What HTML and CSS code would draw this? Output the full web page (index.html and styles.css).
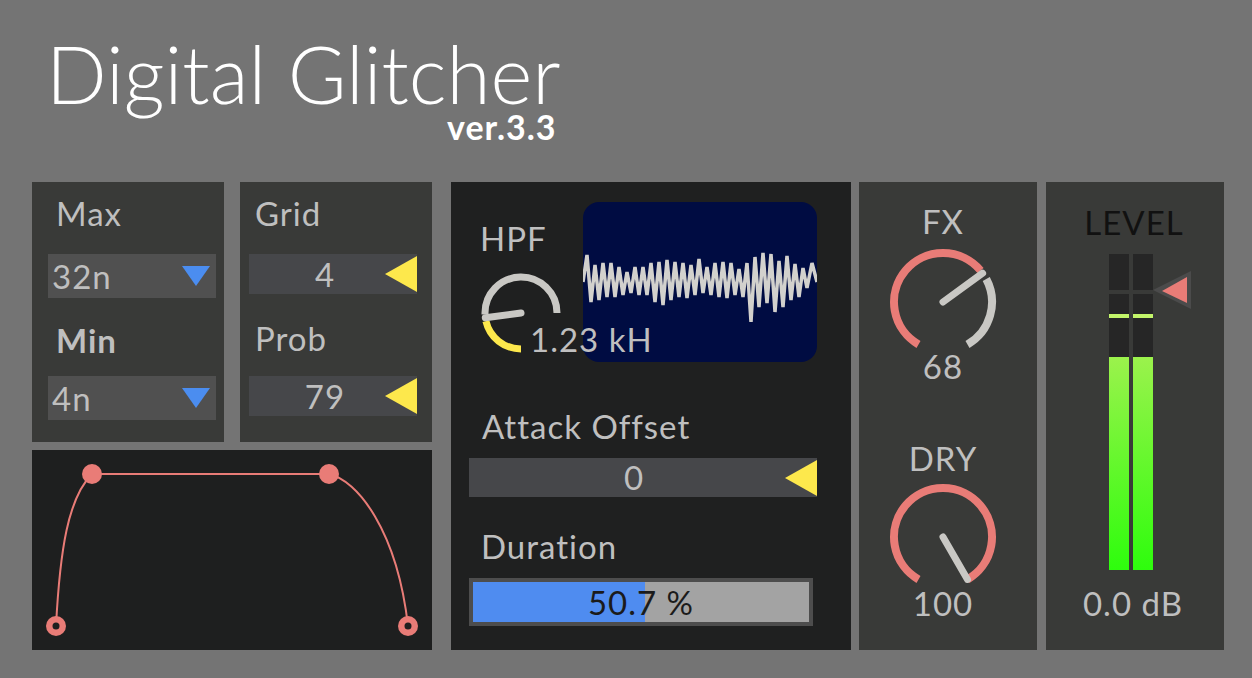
FILE: index.html
```html
<!DOCTYPE html>
<html>
<head>
  <title>Digital Glitcher</title>
  <link rel="stylesheet" href="styles.css">
</head>
<body>
  <div class="device">
    <header class="title">
      <div class="title-inner">
        <h1>Digital Glitcher</h1>
        <div class="ver">ver.3.3</div>
      </div>
    </header>

    <main class="rack">
      <div class="left-col">
        <div class="top-pair">
          <!-- note length menus -->
          <section class="panel menus">
            <div class="label">Max</div>
            <div class="menu"><span>32n</span><i class="arrow-down"></i></div>
            <div class="label bold gap-min">Min</div>
            <div class="menu menu-2"><span>4n</span><i class="arrow-down"></i></div>
          </section>

          <!-- grid / probability -->
          <section class="panel numbers">
            <div class="label">Grid</div>
            <div class="numbox"><span>4</span><i class="arrow-left"></i></div>
            <div class="label gap-prob">Prob</div>
            <div class="numbox numbox-2"><span>79</span><i class="arrow-left"></i></div>
          </section>
        </div>

        <!-- envelope shape -->
        <section class="panel envelope">
          <svg width="400" height="200" viewBox="0 0 400 200">
            <g fill="none" stroke="#e97c77" stroke-width="2">
              <path d="M24,176 C28,100 36,48 60,24"/>
              <path d="M60,24 L297,24"/>
              <path d="M297,24 C325,30 365,80 376,176"/>
            </g>
            <g fill="#e97c77">
              <circle cx="60" cy="24" r="10"/>
              <circle cx="297" cy="24" r="10"/>
              <circle cx="24" cy="176" r="10"/>
              <circle cx="376" cy="176" r="10"/>
            </g>
            <circle cx="24" cy="176" r="3.5" fill="#1e1f1f"/>
            <circle cx="376" cy="176" r="3.5" fill="#1e1f1f"/>
          </svg>
        </section>
      </div>

      <section class="panel middle">
        <div class="hpf-row">
          <div class="hpf">
            <div class="label hpf-label">HPF</div>
            <svg class="hpf-knob" width="90" height="90" viewBox="-45 -45 90 90">
              <g fill="none" stroke-width="7">
                <path d="M0,36 A36,36 0 0 1 -35.08,8.1" stroke="#fde84c"/>
                <path d="M-35.98,1.26 A36,36 0 1 1 36,0" stroke="#c9c8c4"/>
              </g>
              <line x1="0" y1="0" x2="-35.7" y2="4.7" stroke="#c9c8c4" stroke-width="7" stroke-linecap="round"/>
            </svg>
          </div>
          <div class="scope">
            <svg width="234" height="160" viewBox="0 0 234 160">
              <polyline fill="none" stroke="#d2d1cd" stroke-width="3.5" stroke-linejoin="miter"
                points="0,80 4,53 8,100 12,63 16,98 20,61 24,95 28,61 32,95 36,65 40,93 44,70 48,91 52,65 56,93 60,65 64,93 68,61 72,100 76,60 80,103 84,58 88,98 92,60 96,95 100,61 104,96 108,63 112,93 116,57 120,91 124,65 128,93 132,61 136,95 140,60 144,96 148,61 152,93 156,67 160,95 164,61 168,120 172,55 176,105 180,51 184,101 188,52 192,110 196,59 200,105 204,54 208,98 212,62 216,95 220,66 224,86 229,61 234,80"/>
            </svg>
          </div>
          <div class="hpf-value">1.23 kH</div>
        </div>

        <div class="label attack-label">Attack Offset</div>
        <div class="numbox wide"><span>0</span><i class="arrow-left"></i></div>

        <div class="label duration-label">Duration</div>
        <div class="slider">
          <div class="slider-fill" style="width: 51.2%;"></div>
          <span>50.7 %</span>
        </div>
      </section>

      <section class="panel knobs">
        <div class="label">FX</div>
        <svg class="dial dial-fx" width="112" height="112" viewBox="-56 -56 112 112">
          <g fill="none" stroke-width="8">
            <path d="M-24.5,42.44 A49,49 0 1 1 37.54,-31.5" stroke="#e97c77"/>
            <path d="M43.26,-23 A49,49 0 0 1 24.5,42.44" stroke="#c9c8c4"/>
          </g>
          <line x1="0" y1="0" x2="39.6" y2="-28.8" stroke="#c9c8c4" stroke-width="7" stroke-linecap="round"/>
        </svg>
        <div class="value">68</div>

        <div class="label dry-label">DRY</div>
        <svg class="dial dial-dry" width="112" height="112" viewBox="-56 -56 112 112">
          <path d="M-24.5,42.44 A49,49 0 1 1 24.5,42.44" fill="none" stroke="#e97c77" stroke-width="8"/>
          <line x1="0" y1="0" x2="24.5" y2="42.4" stroke="#c9c8c4" stroke-width="7" stroke-linecap="round"/>
        </svg>
        <div class="value">100</div>
      </section>

      <section class="panel level">
        <div class="label level-label">LEVEL</div>
        <div class="meter">
          <div class="meter-bar">
            <div class="seg seg-a"></div><div class="seg-line"></div><div class="seg seg-b"></div><div class="peak"></div><div class="seg seg-c"></div><div class="fill"></div>
          </div>
          <div class="meter-bar">
            <div class="seg seg-a"></div><div class="seg-line"></div><div class="seg seg-b"></div><div class="peak"></div><div class="seg seg-c"></div><div class="fill"></div>
          </div>
          <svg class="meter-marker" width="40" height="40" viewBox="0 0 40 40">
            <polygon points="0,19 38,0 38,38" fill="#4b4b4b"/>
            <polygon points="9,20 34,6 34,32" fill="#e97c77"/>
          </svg>
        </div>
        <div class="value db">0.0 dB</div>
      </section>
    </main>
  </div>
</body>
</html>
```

FILE: styles.css
```css
/* Digital Glitcher device */
body {
  margin: 0;
  background-color: #747474;
  font-family: Lato, "Liberation Sans", sans-serif;
  color: #bfbfbf;
}

.device {
  width: 1252px;
  height: 678px;
  overflow: hidden;
}

/* title */
.title {
  height: 182px;
  box-sizing: border-box;
  padding: 38px 0 0 46px;
}

.title-inner {
  display: inline-block;
}

h1 {
  margin: 0;
  font-size: 80px;
  line-height: 70px;
  font-weight: 300;
  color: #ffffff;
}

.ver {
  margin-top: 2px;
  padding-right: 4px;
  text-align: right;
  font-size: 34px;
  line-height: 34px;
  font-weight: 700;
  letter-spacing: 1px;
  color: #ffffff;
}

/* panels */
.rack {
  display: flex;
  height: 468px;
  padding-left: 32px;
}

.panel {
  background-color: #393a38;
  box-sizing: border-box;
}

.left-col {
  width: 400px;
  display: flex;
  flex-direction: column;
  gap: 8px;
}

.top-pair {
  display: flex;
  gap: 16px;
  height: 260px;
}

.top-pair .panel {
  width: 192px;
  padding-top: 11px;
}

.label {
  height: 40px;
  font-size: 33px;
  line-height: 40px;
  letter-spacing: 1px;
  white-space: nowrap;
}

.bold {
  font-weight: 700;
}

/* menus */
.menus {
  padding-left: 16px;
}

.menus .label {
  padding-left: 8px;
}

.menu {
  position: relative;
  width: 168px;
  height: 44px;
  margin-top: 21px;
  background-color: #505050;
  font-size: 33px;
  line-height: 44px;
  letter-spacing: 1px;
  padding-left: 4px;
  box-sizing: border-box;
}

.menus .gap-min {
  margin-top: 22px;
}

.menu-2 {
  margin-top: 16px;
}

.arrow-down {
  position: absolute;
  right: 6px;
  top: 12px;
  width: 0;
  height: 0;
  border-left: 14px solid transparent;
  border-right: 14px solid transparent;
  border-top: 20px solid #4b8df0;
}

/* number boxes */
.numbers {
  padding-left: 9px;
}

.numbers .label {
  padding-left: 6px;
}

.numbox {
  position: relative;
  width: 168px;
  height: 40px;
  margin-top: 21px;
  padding-right: 16px;
  box-sizing: border-box;
  background-color: #46474a;
  font-size: 33px;
  line-height: 40px;
  letter-spacing: 1px;
  text-align: center;
}

.numbers .gap-prob {
  margin-top: 24px;
}

.numbox-2 {
  margin-top: 18px;
}

.arrow-left {
  position: absolute;
  right: 0;
  top: 2px;
  width: 0;
  height: 0;
  border-top: 18px solid transparent;
  border-bottom: 18px solid transparent;
  border-right: 32px solid #fde84c;
}

/* envelope */
.envelope {
  height: 200px;
  background-color: #1e1f1f;
}

.envelope svg {
  display: block;
}

/* middle panel */
.middle {
  position: relative;
  width: 400px;
  margin-left: 19px;
  background-color: #1f2020;
}

.hpf-row {
  position: relative;
  display: flex;
  padding-top: 20px;
}

.hpf {
  width: 132px;
}

.hpf-label {
  margin-top: 16px;
  padding-left: 29px;
}

.hpf-knob {
  display: block;
  margin: 10px 0 0 25px;
}

.scope {
  width: 234px;
  height: 160px;
  border-radius: 16px;
  background-color: #000c42;
  overflow: hidden;
}

.scope svg {
  display: block;
}

.hpf-value {
  position: absolute;
  left: 79px;
  top: 137px;
  font-size: 33px;
  line-height: 40px;
  letter-spacing: 1px;
  white-space: nowrap;
}

.attack-label {
  margin-top: 44px;
  padding-left: 31px;
}

.numbox.wide {
  width: 348px;
  height: 39px;
  margin: 12px 0 0 18px;
  line-height: 39px;
  padding-right: 18px;
}

.duration-label {
  margin-top: 29px;
  padding-left: 30px;
}

.slider {
  position: relative;
  width: 344px;
  height: 48px;
  margin: 12px 0 0 18px;
  border: 4px solid #4d4d4d;
  box-sizing: border-box;
  background-color: #a3a3a3;
  text-align: center;
  font-size: 33px;
  line-height: 40px;
  letter-spacing: 1px;
  color: #1b1b1b;
}

.slider-fill {
  position: absolute;
  left: 0;
  top: 0;
  bottom: 0;
  background-color: #4f8cf0;
}

.slider span {
  position: relative;
}

/* knobs */
.knobs {
  width: 178px;
  margin-left: 8px;
  padding: 19px 10px 0 0;
  display: flex;
  flex-direction: column;
  align-items: center;
}

.dial {
  display: block;
}

.dial-fx {
  margin-top: 5px;
}

.value {
  height: 24px;
  font-size: 33px;
  line-height: 24px;
  letter-spacing: 1px;
  white-space: nowrap;
}

.dial-fx + .value {
  margin-top: -4px;
}

.dry-label {
  margin-top: 60px;
}

.dial-dry {
  margin-top: 3px;
}

.dial-dry + .value {
  margin-top: -2px;
}

/* level meter */
.level {
  width: 178px;
  margin-left: 9px;
  padding-top: 20px;
}

.level-label {
  text-align: center;
  padding-right: 2px;
  color: #111111;
}

.meter {
  position: relative;
  display: flex;
  gap: 4px;
  width: 44px;
  height: 316px;
  margin: 12px 0 0 63px;
}

.meter-bar {
  width: 20px;
  display: flex;
  flex-direction: column;
}

.seg {
  background-color: #262626;
}

.seg-a {
  height: 36px;
}

.seg-line {
  height: 4px;
}

.seg-b {
  height: 20px;
}

.peak {
  height: 4px;
  background-color: #c3f56a;
}

.seg-c {
  height: 39px;
}

.fill {
  flex: 1;
  background: linear-gradient(#9bf24c, #2efd0d);
}

.meter-marker {
  position: absolute;
  left: 44px;
  top: 17px;
}

.db {
  margin-top: 21px;
  text-align: center;
  padding-right: 4px;
}
```
